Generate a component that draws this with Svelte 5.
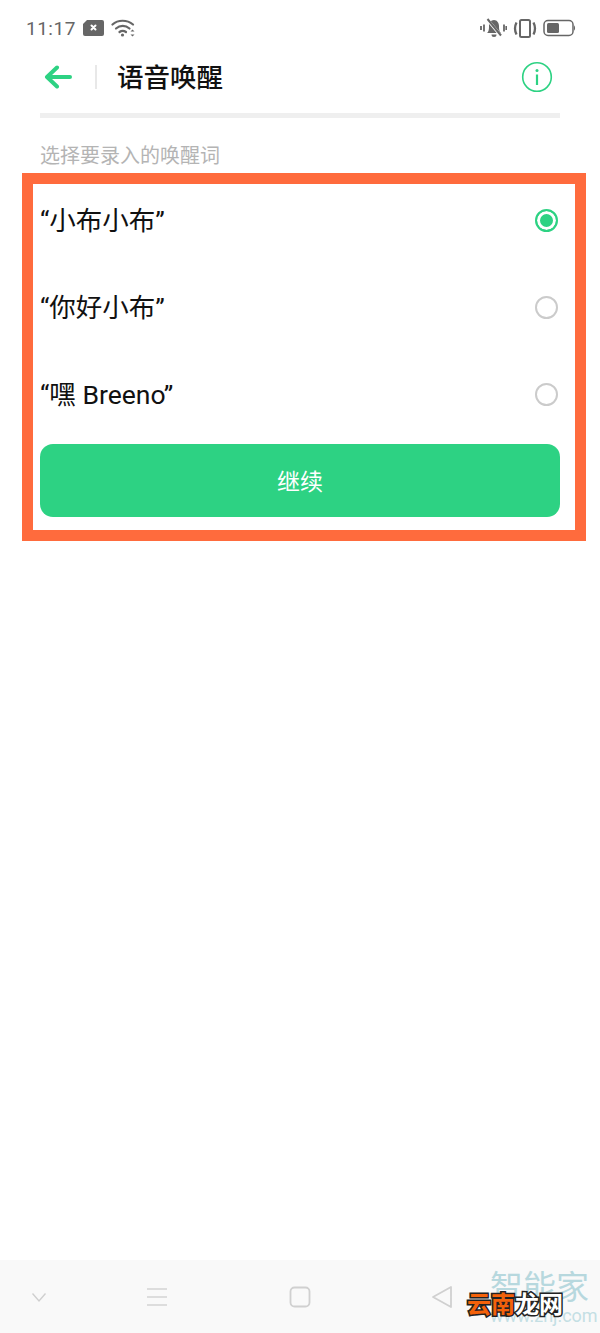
<script>
	let options = [
		{ label: '“小布小布”', selected: true },
		{ label: '“你好小布”', selected: false },
		{ label: '“嘿 Breeno”', selected: false }
	];
</script>

<div class="page">
	<div class="status">
		<div class="status-side">
			<span class="time">11:17</span>
			<svg class="sim" width="23" height="18" viewBox="0 0 23 18">
				<path d="M5 1h15a2 2 0 0 1 2 2v12a2 2 0 0 1-2 2H3a2 2 0 0 1-2-2V5z" fill="#666" />
				<path d="M9.5 6.5l4 4M13.5 6.5l-4 4" stroke="#fff" stroke-width="2" stroke-linecap="round" />
			</svg>
			<svg class="wifi" width="24" height="20" viewBox="0 0 24 20" fill="none" stroke="#666" stroke-width="2.200" stroke-linecap="round">
				<path d="M1.500 6.500C7 1.500 16 1.500 22 6.500" />
				<path d="M5 10.500C9 7 14.500 7 18.500 10.500" />
				<path d="M8.500 14C10.500 12.500 13 12.500 15 14" />
				<circle cx="11.500" cy="17" r="1.600" fill="#666" stroke="none" />
				<path d="M19.500 13.500l2-2 2 2zM19.500 16.500l2 2 2-2z" fill="#666" stroke="none" />
			</svg>
		</div>
		<div class="status-side right">
			<svg width="27" height="22" viewBox="0 0 27 20" fill="none">
				<path d="M8 14c1-2 1-4 1-6 0-3 2-6 5-6s5 3 5 6c0 2 0 4 1 6l1 1H7z" fill="#666" />
				<path d="M11.500 16.500a2.500 2.500 0 0 0 5 0z" fill="#666" />
				<path d="M7 1l14 17" stroke="#fff" stroke-width="3" />
				<path d="M7.500 1l13.500 16.500" stroke="#666" stroke-width="2" />
				<path d="M1 8v4M4 6.500v7M24 6.500v7M26.300 8v4" stroke="#666" stroke-width="1.800" />
			</svg>
			<svg width="24" height="21" viewBox="0 0 24 20" fill="none" stroke="#666" stroke-width="2">
				<rect x="7" y="1.500" width="10" height="17" rx="1.500" />
				<path d="M3.500 4C1.500 8 1.500 12 3.500 16M20.500 4c2 4 2 8 0 12" stroke-width="2.300" />
			</svg>
			<svg width="33" height="18" viewBox="0 0 33 18" fill="none">
				<rect x="1" y="1.500" width="29" height="15" rx="4" stroke="#666" stroke-width="1.500" />
				<rect x="4" y="4" width="12" height="10" rx="1.500" fill="#666" />
				<path d="M31 6.500c1.300.5 1.500 4.500 0 5z" fill="#666" />
			</svg>
		</div>
	</div>

	<header class="toolbar">
		<button class="back" aria-label="返回">
			<svg width="28" height="24" viewBox="0 0 28 24" fill="none" stroke="#2dd283" stroke-width="4" stroke-linecap="round" stroke-linejoin="round">
				<path d="M26 12H3M13 2.500L3 12l10 9.500" />
			</svg>
		</button>
		<span class="sep"></span>
		<h1>语音唤醒</h1>
		<svg class="info" width="32" height="32" viewBox="0 0 32 32" fill="none" stroke="#2dd283">
			<circle cx="16" cy="16" r="14.300" stroke-width="1.600" />
			<circle cx="16" cy="9.500" r="1.500" fill="#2dd283" stroke="none" />
			<path d="M16 13.500v10.500" stroke-width="2.200" />
		</svg>
	</header>
	<div class="rule"></div>

	<p class="hint">选择要录入的唤醒词</p>

	<section class="box">
		{#each options as opt}
			<div class="row">
				<span class="label">{opt.label}</span>
				<span class="radio" class:on={opt.selected}></span>
			</div>
		{/each}
		<button class="continue">继续</button>
	</section>

	<div class="spacer"></div>

	<nav class="navbar">
		<svg width="16" height="12" viewBox="0 0 16 12" fill="none" stroke="#cfcfcf" stroke-width="1.400">
			<path d="M1.500 2.500L8 10l6.500-7.500" />
		</svg>
		<svg width="22" height="20" viewBox="0 0 22 20" fill="none" stroke="#d4d4d4" stroke-width="1.500">
			<path d="M1 2h20M1 10h20M1 18h20" />
		</svg>
		<svg width="22" height="22" viewBox="0 0 22 22" fill="none" stroke="#d0d0d0" stroke-width="1.800">
			<rect x="1.500" y="1.500" width="19" height="19" rx="4" />
		</svg>
		<svg width="22" height="24" viewBox="0 0 22 24" fill="none" stroke="#d0d0d0" stroke-width="1.800" stroke-linejoin="round">
			<path d="M20 2v20L2 12z" />
		</svg>
	</nav>

	<div class="mark">
		<span class="mark-big">智能家</span>
		<span class="mark-url">www.znj.com</span>
	</div>
	<div class="stamp"><span class="orange">云南</span><span class="white">龙网</span></div>
</div>

<style>
	:global(body) {
		margin: 0;
		background: #fff;
	}

	.page {
		position: relative;
		width: 600px;
		height: 1333px;
		display: flex;
		flex-direction: column;
		overflow: hidden;
		background: #fff;
		font-family: 'Roboto', 'Noto Sans CJK SC', sans-serif;
		color: #111;
	}

	.status {
		height: 54px;
		padding: 2px 24px 0 26px;
		display: flex;
		align-items: center;
		justify-content: space-between;
		box-sizing: border-box;
	}

	.status-side {
		display: flex;
		align-items: center;
		gap: 6px;
	}

	.status-side.right {
		gap: 6px;
	}

	.time {
		font-size: 19px;
		color: #666;
		letter-spacing: 0.5px;
	}

	.toolbar {
		height: 46px;
		padding: 0 47px 0 44px;
		display: flex;
		align-items: center;
	}

	.back {
		width: 30px;
		height: 30px;
		padding: 0;
		border: 0;
		background: none;
		display: flex;
		align-items: center;
	}

	.sep {
		width: 2px;
		height: 24px;
		background: #e8e8e8;
		margin-left: 21px;
	}

	h1 {
		flex: 1;
		margin: 0 0 0 20px;
		padding-bottom: 4px;
		font-size: 26.500px;
		font-weight: 500;
		color: #111;
	}

	.rule {
		height: 5px;
		margin: 13px 40px 0;
		background: #efefef;
	}

	.hint {
		margin: 0;
		height: 55px;
		padding: 0 40px;
		font-size: 20px;
		line-height: 76px;
		color: #b4b4b4;
		box-sizing: border-box;
	}

	.box {
		margin: 0 14px 0 22px;
		height: 368px;
		border: 11px solid #ff6b3d;
		box-sizing: border-box;
		padding: 0 15px 0 7px;
		display: flex;
		flex-direction: column;
	}

	.row {
		height: 87px;
		flex: none;
		display: flex;
		align-items: center;
		justify-content: space-between;
		padding-right: 2px;
	}

	.row:first-child {
		margin-top: -7px;
	}

	.label {
		font-size: 26.500px;
		padding-bottom: 4px;
		color: #111;
	}

	.radio {
		width: 23px;
		height: 23px;
		border-radius: 50%;
		border: 2px solid #cbcbcb;
		box-sizing: border-box;
	}

	.radio.on {
		border-color: #2dd283;
		background: #2dd283;
		box-shadow: inset 0 0 0 3px #fff;
	}

	.continue {
		height: 73px;
		flex: none;
		margin-top: 6px;
		border: 0;
		border-radius: 13px;
		background: #2dd283;
		color: #fff;
		font-family: inherit;
		font-size: 23px;
		padding: 0 0 2px;
	}

	.spacer {
		flex: 1;
	}

	.navbar {
		height: 73px;
		background: #f9f9f9;
		display: flex;
		align-items: center;
		padding-left: 31px;
	}

	.navbar svg:nth-child(1) {
		margin-right: 99px;
	}

	.navbar svg:nth-child(2) {
		margin-right: 121px;
	}

	.navbar svg:nth-child(3) {
		margin-right: 120px;
	}

	.mark {
		position: absolute;
		left: 490px;
		top: 1271px;
		width: 102px;
		color: #b7d8de;
		line-height: 1;
		white-space: nowrap;
	}

	.mark-big {
		display: block;
		font-size: 33px;
	}

	.mark-url {
		display: block;
		margin-top: 3px;
		text-align: right;
		font-size: 18px;
		color: #c4dfe4;
	}

	.stamp {
		position: absolute;
		left: 467px;
		top: 1291px;
		font-size: 24px;
		line-height: 28px;
		font-weight: 700;
		white-space: nowrap;
		-webkit-text-stroke: 3px #222;
		paint-order: stroke fill;
	}

	.orange {
		color: #f4610a;
	}

	.white {
		color: #fff;
	}
</style>
